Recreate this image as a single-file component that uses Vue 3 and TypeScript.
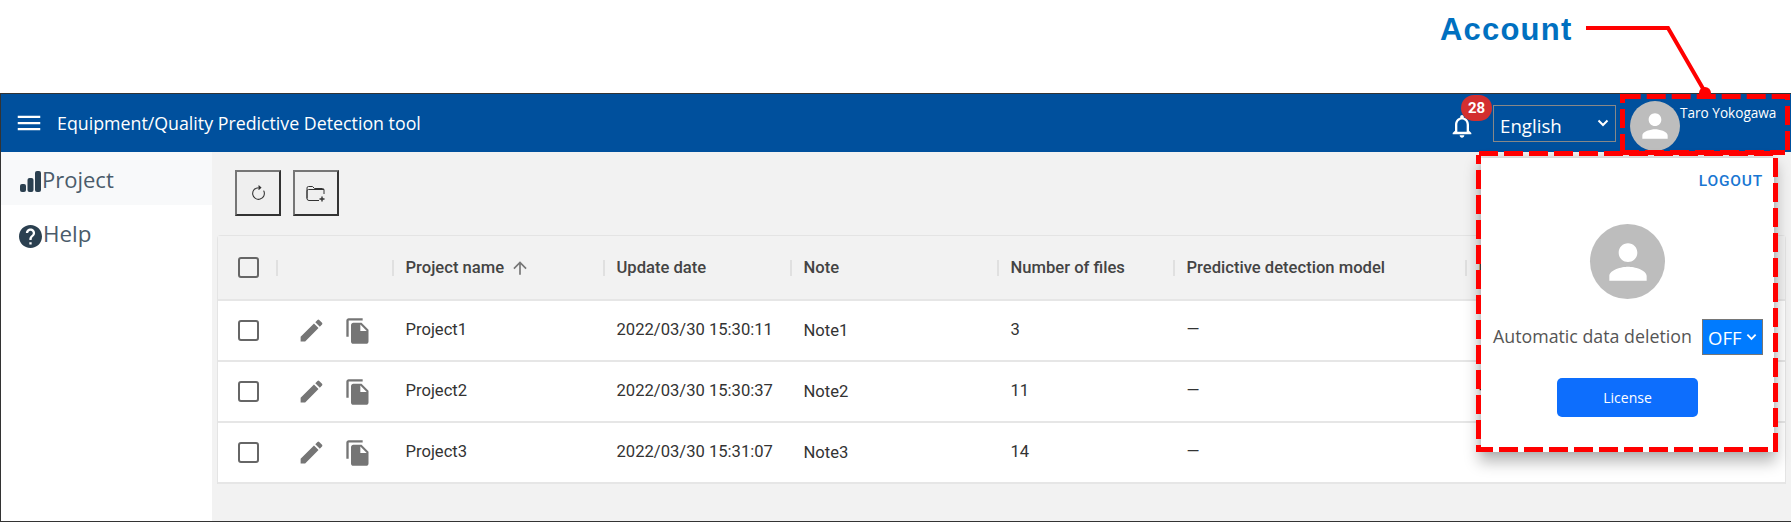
<script setup lang="ts">
interface Row { name: string; date: string; note: string; files: number }
interface Dash { x1: number; y1: number; x2: number; y2: number; offset: number }
const rows: Row[] = [
  { name: 'Project1', date: '2022/03/30 15:30:11', note: 'Note1', files: 3 },
  { name: 'Project2', date: '2022/03/30 15:30:37', note: 'Note2', files: 11 },
  { name: 'Project3', date: '2022/03/30 15:31:07', note: 'Note3', files: 14 },
]
const dashes: Dash[] = [
  { x1: 1620, y1: 96.5, x2: 1790, y2: 96.5, offset: 23.3 },
  { x1: 1622.5, y1: 94, x2: 1622.5, y2: 155, offset: 10 },
  { x1: 1787.5, y1: 94, x2: 1787.5, y2: 152, offset: 13 },
  { x1: 1620, y1: 152.5, x2: 1785, y2: 152.5, offset: 0 },
  { x1: 1476, y1: 153.5, x2: 1778, y2: 153.5, offset: 22 },
  { x1: 1478.5, y1: 155, x2: 1478.5, y2: 452, offset: 10 },
  { x1: 1476, y1: 449.5, x2: 1778, y2: 449.5, offset: 2 },
  { x1: 1775.5, y1: 155, x2: 1775.5, y2: 452, offset: 22 },
]
const person = 'M12 12c2.21 0 4-1.79 4-4s-1.79-4-4-4-4 1.79-4 4 1.79 4 4 4zm0 2c-2.67 0-8 1.34-8 4v2h16v-2c0-2.66-5.33-4-8-4z'
</script>

<template>
  <div class="page">
    <div class="annotation">
      <span class="account-label">Account</span>
    </div>
    <div class="frame">
      <header class="topbar">
        <svg class="menu" viewBox="0 0 24 24"><path d="M3 6.200h18v1.800H3zM3 11.100h18v1.800H3zM3 16h18v1.800H3z" /></svg>
        <span class="title">Equipment/Quality Predictive Detection tool</span>
        <div class="bell">
          <svg viewBox="0 0 24 24"><path d="M12 22c1.1 0 2-.9 2-2h-4c0 1.1.9 2 2 2zm6-6v-5c0-3.07-1.63-5.64-4.5-6.32V4c0-.83-.67-1.5-1.5-1.5s-1.5.67-1.5 1.5v.68C7.64 5.36 6 7.92 6 11v5l-2 2v1h16v-1l-2-2zm-2 1H8v-6c0-2.48 1.51-4.5 4-4.5s4 2.02 4 4.5v6z" /></svg>
          <span class="badge">28</span>
        </div>
        <div class="lang">
          <span>English</span>
          <svg viewBox="0 0 12 8"><path d="M1.500 1.500 6 6l4.500-4.500" /></svg>
        </div>
        <div class="avatar small"><svg viewBox="0 0 24 24"><path :d="person" /></svg></div>
        <span class="user">Taro Yokogawa</span>
      </header>
      <div class="body">
        <nav class="side">
          <div class="nav active">
            <svg class="nav-icon" viewBox="0 0 21 21">
              <rect x="0" y="13" width="6" height="8" rx="2" />
              <rect x="7.500" y="7" width="6" height="14" rx="2" />
              <rect x="15" y="0" width="6" height="21" rx="2" />
            </svg>
            <span>Project</span>
          </div>
          <div class="nav">
            <svg class="nav-icon help" viewBox="2 2 20 20"><path d="M12 2C6.48 2 2 6.48 2 12s4.48 10 10 10 10-4.48 10-10S17.52 2 12 2zm1 17h-2v-2h2v2zm2.07-7.75l-.9.92C13.45 12.9 13 13.5 13 15h-2v-.5c0-1.1.45-2.1 1.17-2.83l1.24-1.26c.37-.36.59-.86.59-1.41 0-1.1-.9-2-2-2s-2 .9-2 2H8c0-2.21 1.79-4 4-4s4 1.79 4 4c0 .88-.36 1.68-.93 2.25z" /></svg>
            <span class="help-text">Help</span>
          </div>
        </nav>
        <main class="content">
          <div class="toolbar">
            <button class="tool" type="button">
              <svg width="17" height="17" viewBox="0 0 16 16"><path d="M8 3a5 5 0 1 0 4.546 2.914.5.5 0 0 1 .908-.417A6 6 0 1 1 8 2v1z" /><path d="M8 4.466V.534a.25.25 0 0 1 .41-.192l2.36 1.966c.12.1.12.284 0 .384L8.41 4.658A.25.25 0 0 1 8 4.466z" /></svg>
            </button>
            <button class="tool" type="button">
              <svg width="20" height="17" viewBox="0 0 20 17">
                <path class="outline" d="M1 13.500V3q0-1.500 1.500-1.500h4L8.500 3.500h8q1.500 0 1.500 1.500v4M13 15.500H3q-2 0-2-2V6q0-1.500 1.500-1.500H18" />
                <path class="outline plus" d="M16 11.500v5M13.500 14h5" />
              </svg>
            </button>
          </div>
          <div class="table">
            <div class="row head">
              <div class="cell"><span class="check"></span></div>
              <div class="cell sep"></div>
              <div class="cell sep">Project name
                <svg class="sort" viewBox="0 0 24 24"><path d="M4 12l1.41 1.41L11 7.83V20h2V7.83l5.58 5.59L20 12l-8-8-8 8z" /></svg>
              </div>
              <div class="cell sep">Update date</div>
              <div class="cell sep">Note</div>
              <div class="cell sep">Number of files</div>
              <div class="cell sep">Predictive detection model</div>
              <div class="cell sep">H</div>
            </div>
            <div v-for="r in rows" :key="r.name" class="row">
              <div class="cell"><span class="check"></span></div>
              <div class="cell actions">
                <svg class="edit" viewBox="0 0 24 24"><path d="M3 17.25V21h3.750L17.810 9.940l-3.750-3.750L3 17.250zM20.710 7.040c.39-.39.39-1.020 0-1.410l-2.340-2.340a.9959.9959 0 0 0-1.410 0l-1.830 1.830 3.750 3.750 1.830-1.830z" /></svg>
                <svg class="copy" viewBox="0 0 24 24"><path d="M16 1H4c-1.100 0-2 .9-2 2v14h2V3h12V1zm-1 4l6 6v10c0 1.100-.9 2-2 2H7.990C6.890 23 6 22.100 6 21l.01-14c0-1.100.89-2 1.990-2h7zm-1 7h5.500L14 6.500V12z" /></svg>
              </div>
              <div class="cell text">{{ r.name }}</div>
              <div class="cell text">{{ r.date }}</div>
              <div class="cell text note">{{ r.note }}</div>
              <div class="cell text">{{ r.files }}</div>
              <div class="cell text">—</div>
              <div class="cell text">—</div>
            </div>
          </div>
        </main>
      </div>
    </div>

    <section class="popup">
      <a class="logout">LOGOUT</a>
      <div class="avatar large"><svg viewBox="0 0 24 24"><path :d="person" /></svg></div>
      <div class="auto">
        <span>Automatic data deletion</span>
        <div class="off">
          <span>OFF</span>
          <svg viewBox="0 0 12 8"><path d="M1.500 1.500 6 6l4.500-4.500" /></svg>
        </div>
      </div>
      <button class="license" type="button">License</button>
    </section>

    <svg class="marks" width="1791" height="523" viewBox="0 0 1791 523">
      <path class="leader" d="M1586 28H1668L1705 92" />
      <circle class="dot" cx="1705" cy="93" r="6" />
      <line
        v-for="(d, i) in dashes"
        :key="i"
        class="dash"
        :x1="d.x1"
        :y1="d.y1"
        :x2="d.x2"
        :y2="d.y2"
        :stroke-dashoffset="d.offset"
      />
    </svg>
  </div>
</template>

<style scoped>
.page {
  position: relative;
  width: 1791px;
  height: 523px;
  overflow: hidden;
  background: #fff;
  font-family: Roboto, "Liberation Sans", sans-serif;
}
.annotation {
  height: 93px;
  padding: 12px 0 0 1440px;
  box-sizing: border-box;
}
.account-label {
  font-family: "Liberation Sans", Arial, sans-serif;
  font-weight: 700;
  font-size: 31px;
  line-height: 36px;
  letter-spacing: 1.200px;
  color: #0070c0;
}
.frame {
  height: 429px;
  box-sizing: border-box;
  border: solid #333;
  border-width: 1px 0 1px 1px;
  display: flex;
  flex-direction: column;
}
.topbar {
  height: 58px;
  flex: none;
  background: #00509d;
  color: #fff;
  display: flex;
  align-items: center;
  box-sizing: border-box;
  padding-left: 13px;
}
.menu {
  width: 30px;
  height: 30px;
  fill: #fff;
  flex: none;
}
.title {
  margin-left: 13px;
  font-family: "Open Sans", "Noto Sans", sans-serif;
  font-size: 17.800px;
  flex: 1;
}
.bell {
  position: relative;
  width: 28px;
  height: 28px;
  margin-top: 6px;
  margin-right: 2px;
}
.bell svg {
  width: 28px;
  height: 28px;
  fill: #fff;
  display: block;
}
.badge {
  position: absolute;
  left: 13px;
  top: -17px;
  width: 31px;
  height: 26px;
  border-radius: 13px;
  background: #d32f2f;
  font-size: 15px;
  font-weight: 700;
  line-height: 26px;
  text-align: center;
}
.lang {
  width: 123px;
  height: 37px;
  margin: 0 0 0 15px;
  box-sizing: border-box;
  border: 1px solid #888;
  display: flex;
  align-items: center;
  justify-content: space-between;
  padding: 4px 6px 0;
  font-family: "Open Sans", "Noto Sans", sans-serif;
  font-size: 18.700px;
}
.lang svg {
  width: 12px;
  height: 8px;
  fill: none;
  stroke: #fff;
  stroke-width: 2;
  margin-top: -5px;
}
.avatar {
  border-radius: 50%;
  background: #bdbdbd;
  display: flex;
  align-items: center;
  justify-content: center;
  flex: none;
}
.avatar svg {
  fill: #fff;
}
.avatar.small {
  width: 50px;
  height: 50px;
  margin: 5px 0 0 14px;
}
.avatar.small svg {
  width: 38px;
  height: 38px;
}
.user {
  width: 111px;
  font-family: "Open Sans", "Noto Sans", sans-serif;
  font-size: 13.600px;
  align-self: flex-start;
  margin-top: 9px;
  white-space: nowrap;
}
.body {
  flex: 1;
  display: flex;
  min-height: 0;
}
.side {
  width: 211px;
  flex: none;
  background: #fff;
  font-family: "Open Sans", "Noto Sans", sans-serif;
  font-size: 22px;
  color: #4a5b6a;
}
.nav {
  height: 53px;
  display: flex;
  align-items: flex-start;
  padding: 12px 0 0 19px;
  box-sizing: border-box;
}
.nav.active {
  background: #f8f9fa;
}
.nav-icon {
  width: 21px;
  height: 21px;
  fill: #2b4050;
  margin: 7px 1px 0 0;
  flex: none;
}
.nav-icon.help {
  width: 23px;
  height: 23px;
  margin: 8px 1px 0 -1px;
}
.help-text {
  margin-top: 1px;
  font-size: 22.400px;
}
.content {
  flex: 1;
  background: #f2f2f2;
  padding: 18px 5px 0 5px;
  min-width: 0;
}
.toolbar {
  display: flex;
  gap: 12px;
  padding-left: 18px;
  margin-bottom: 19px;
}
.tool {
  width: 46px;
  height: 46px;
  box-sizing: border-box;
  padding: 0;
  border: 2px solid;
  border-color: #767676 #333 #333 #767676;
  background: #efefef;
  display: flex;
  align-items: center;
  justify-content: center;
}
.tool svg {
  fill: #333;
}
.tool .outline {
  fill: none;
  stroke: #333;
  stroke-width: 1;
}
.tool .plus {
  stroke-width: 1.400;
}
.table {
  border: 1px solid #e4e4e4;
  border-bottom: 0;
  border-radius: 4px 4px 0 0;
  color: #333;
  font-size: 16.600px;
}
.row {
  display: grid;
  grid-template-columns: 58px 116px 211px 187px 207px 176px 292px 1fr;
  height: 61px;
  background: #fff;
  border-bottom: 2px solid #e6e6e6;
  box-sizing: border-box;
  align-items: center;
}
.row.head {
  height: 65px;
  background: #f2f2f2;
  font-weight: 500;
  color: #444;
}
.cell {
  padding-left: 13.500px;
  position: relative;
  display: flex;
  align-items: center;
  white-space: nowrap;
}
.text {
  margin-top: -2px;
}
.head .cell.sep::before {
  content: "";
  position: absolute;
  left: 0;
  top: 50%;
  height: 16px;
  margin-top: -8px;
  width: 2px;
  background: #e0e0e0;
}
.check {
  width: 21px;
  height: 21px;
  box-sizing: border-box;
  border: 2px solid #666;
  border-radius: 3px;
  margin-left: 6px;
  background: #fff;
}
.head .check {
  background: transparent;
}
.sort {
  width: 20px;
  height: 20px;
  fill: #777;
  margin-left: 6px;
}
.actions {
  padding-left: 0;
  height: 100%;
}
.edit {
  width: 29px;
  height: 29px;
  fill: #757575;
  margin-left: 21px;
  flex: none;
}
.copy {
  width: 28px;
  height: 28px;
  fill: #757575;
  margin-left: 18px;
  flex: none;
}
.text.note {
  margin-top: 0;
}
.popup {
  position: absolute;
  left: 1481px;
  top: 158px;
  width: 293px;
  height: 294px;
  background: #fff;
  box-shadow: 0 8px 14px 2px rgba(0, 0, 0, 0.28), 0 0 6px rgba(0, 0, 0, 0.12);
  box-sizing: border-box;
  display: flex;
  flex-direction: column;
  align-items: center;
  padding-top: 16px;
}
.logout {
  align-self: flex-end;
  margin-right: 11px;
  color: #1976d2;
  font-size: 15.500px;
  font-weight: 500;
  line-height: 15px;
  letter-spacing: 0.800px;
}
.avatar.large {
  width: 75px;
  height: 75px;
  margin-top: 35px;
}
.avatar.large svg {
  width: 56px;
  height: 56px;
}
.auto {
  align-self: stretch;
  display: flex;
  align-items: center;
  justify-content: space-between;
  margin-top: 20px;
  padding: 0 11px 0 12px;
  font-family: "Open Sans", "Noto Sans", sans-serif;
  font-size: 17.800px;
  color: #555;
}
.auto > span {
  margin-top: -3px;
}
.off {
  width: 61px;
  height: 36px;
  box-sizing: border-box;
  border: 1px solid #767676;
  background: #007bff;
  color: #fff;
  display: flex;
  align-items: center;
  justify-content: space-between;
  padding: 0 5px;
  font-size: 18.500px;
}
.off svg {
  width: 11px;
  height: 8px;
  fill: none;
  stroke: #fff;
  stroke-width: 2;
}
.license {
  width: 141px;
  height: 39px;
  margin-top: 23px;
  border: 0;
  border-radius: 5px;
  background: #0d6efd;
  color: #fff;
  font-family: "Open Sans", "Noto Sans", sans-serif;
  font-size: 14px;
}
.marks {
  position: absolute;
  left: 0;
  top: 0;
  pointer-events: none;
}
.leader {
  fill: none;
  stroke: #f00;
  stroke-width: 4;
}
.dot {
  fill: #f00;
}
.dash {
  fill: none;
  stroke: #f00;
  stroke-width: 5;
  stroke-dasharray: 19 6;
}
</style>
